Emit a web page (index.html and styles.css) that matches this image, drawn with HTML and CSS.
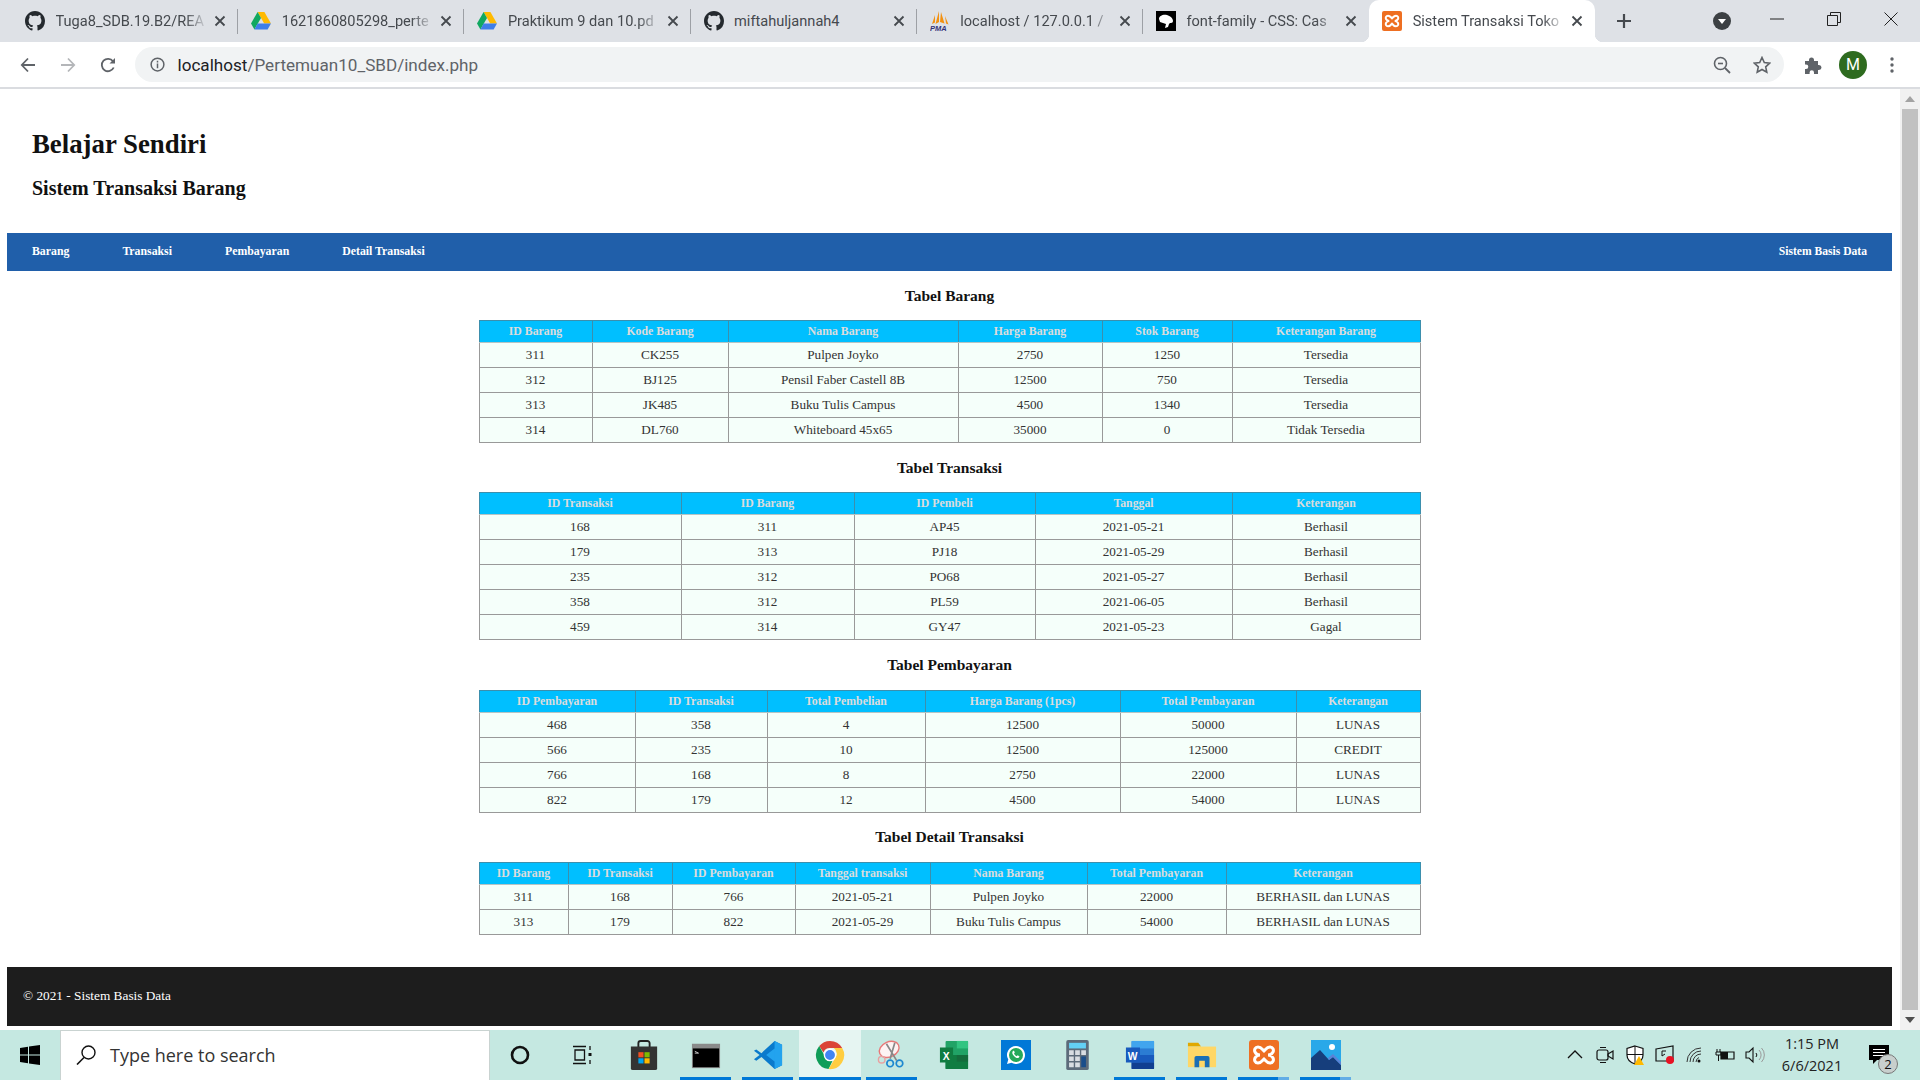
FILE: index.html
```html
<!DOCTYPE html>
<html lang="en">
<head>
    <meta charset="UTF-8">
    <title>Sistem Transaksi Toko</title>
    <link rel="stylesheet" href="styles.css">
</head>
<body>
    <svg class="defs" width="0" height="0">
        <symbol id="github" viewBox="0 0 16 16"><path d="M8 0C3.58 0 0 3.58 0 8c0 3.54 2.29 6.53 5.47 7.59.4.07.55-.17.55-.38 0-.19-.01-.82-.01-1.49-2.01.37-2.53-.49-2.69-.94-.09-.23-.48-.94-.82-1.13-.28-.15-.68-.52-.01-.53.63-.01 1.08.58 1.23.82.72 1.21 1.87.87 2.33.66.07-.52.28-.87.51-1.07-1.78-.2-3.64-.89-3.64-3.95 0-.87.31-1.59.82-2.15-.08-.2-.36-1.02.08-2.12 0 0 .67-.21 2.2.82.64-.18 1.32-.27 2-.27.68 0 1.36.09 2 .27 1.53-1.04 2.2-.82 2.2-.82.44 1.1.16 1.92.08 2.12.51.56.82 1.27.82 2.15 0 3.07-1.87 3.75-3.65 3.95.29.25.54.73.54 1.48 0 1.07-.01 1.93-.01 2.2 0 .21.15.46.55.38A8.013 8.013 0 0016 8c0-4.42-3.58-8-8-8z" fill="#24292e"/></symbol>
        <symbol id="drive" viewBox="0 0 20 18"><path d="M6.6 0h6.8l6.6 11.5h-6.8z" fill="#ffba00"/><path d="M6.6 0l3.4 5.9L3.4 17.5 0 11.5z" fill="#11a861"/><path d="M6.6 11.5H20l-3.4 6H3.4z" fill="#3f7ee8"/></symbol>
        <symbol id="close" viewBox="0 0 12 12"><path d="M1.5 1.5l9 9m0-9l-9 9" stroke="#45494e" stroke-width="1.8" fill="none"/></symbol>
        <symbol id="xampp" viewBox="0 0 30 30"><rect width="30" height="30" rx="3" fill="#ee6f22"/><path d="M9 7c3 0 4 2 6 4 2-2 3-4 6-4 3 0 4 3 3 5-1 2-3 3-5 3 2 0 4 1 5 3 1 2 0 5-3 5-3 0-4-2-6-4-2 2-3 4-6 4-3 0-4-3-3-5 1-2 3-3 5-3-2 0-4-1-5-3-1-2 0-5 3-5z" fill="none" stroke="#fff" stroke-width="3"/></symbol>
    </svg>

    <div class="tabstrip">
        <div class="tab">
            <svg class="favicon"><use href="#github"/></svg>
            <span class="tab-title">Tuga8_SDB.19.B2/REA</span>
            <svg class="tab-close"><use href="#close"/></svg>
        </div>
        <div class="tab">
            <svg class="favicon"><use href="#drive"/></svg>
            <span class="tab-title">1621860805298_perte</span>
            <svg class="tab-close"><use href="#close"/></svg>
        </div>
        <div class="tab">
            <svg class="favicon"><use href="#drive"/></svg>
            <span class="tab-title">Praktikum 9 dan 10.pd</span>
            <svg class="tab-close"><use href="#close"/></svg>
        </div>
        <div class="tab">
            <svg class="favicon"><use href="#github"/></svg>
            <span class="tab-title">miftahuljannah4</span>
            <svg class="tab-close"><use href="#close"/></svg>
        </div>
        <div class="tab">
            <svg class="favicon" viewBox="0 0 20 20"><path d="M9 0L5.500 13l3.500-2zM11 1l-1 10 4.500 1.500zM5 4L2 13l3-1.500zM15 5l1 7.500 2.500 1z" fill="#f29111"/><text x="0" y="19.500" class="pma-text">PMA</text></svg>
            <span class="tab-title">localhost / 127.0.0.1 /</span>
            <svg class="tab-close"><use href="#close"/></svg>
        </div>
        <div class="tab tab-before-active">
            <svg class="favicon" viewBox="0 0 20 20"><rect width="20" height="20" fill="#000"/><path d="M3 8c0-3 4-5 8-4 3 1 6 3 6 6 0 2-2 2-3 2l-1 1-1 3-3 1 1-4-3-1-3-1z" fill="#fff"/></svg>
            <span class="tab-title">font-family - CSS: Cas</span>
            <svg class="tab-close"><use href="#close"/></svg>
        </div>
        <div class="tab tab-active">
            <svg class="favicon"><use href="#xampp"/></svg>
            <span class="tab-title">Sistem Transaksi Toko</span>
            <svg class="tab-close"><use href="#close"/></svg>
        </div>
        <svg class="new-tab" viewBox="0 0 16 16"><path d="M8 1v14M1 8h14" stroke="#45494e" stroke-width="2.2"/></svg>
        <div class="strip-right">
            <svg class="tab-search" viewBox="0 0 18 18"><circle cx="9" cy="9" r="9" fill="#3c4043"/><path d="M5 7h8l-4 5z" fill="#fff"/></svg>
            <div class="window-controls">
                <svg viewBox="0 0 14 14"><path d="M0 7h14" stroke="#222" stroke-width="1"/></svg>
                <svg viewBox="0 0 14 14"><path d="M.5 3.5h10v10H.5zM3.5 3.5v-3h10v10h-3" fill="none" stroke="#222"/></svg>
                <svg viewBox="0 0 14 14"><path d="M.5.5l13 13m0-13l-13 13" stroke="#222"/></svg>
            </div>
        </div>
    </div>

    <div class="toolbar">
        <svg class="nav-btn" viewBox="0 0 16 16"><path d="M15 8H2M8 1.5L1.8 8 8 14.5" fill="none" stroke="#5f6368" stroke-width="1.8"/></svg>
        <svg class="nav-btn" viewBox="0 0 16 16"><path d="M1 8h13M8 1.5L14.2 8 8 14.5" fill="none" stroke="#b4b6b9" stroke-width="1.8"/></svg>
        <svg class="nav-btn" viewBox="0 0 16 16"><path d="M13.7 10.5A6.2 6.2 0 1 1 13 4.3" fill="none" stroke="#5f6368" stroke-width="1.8"/><path d="M15 1v5.5H9.5z" fill="#5f6368"/></svg>
        <div class="omnibox">
            <svg class="info-icon" viewBox="0 0 16 16"><circle cx="8" cy="8" r="6.8" fill="none" stroke="#5f6368" stroke-width="1.6"/><path d="M8 7v5M8 4v1.8" stroke="#5f6368" stroke-width="1.6"/></svg>
            <span class="url"><span class="url-host">localhost</span>/Pertemuan10_SBD/index.php</span>
            <svg class="omni-icon" viewBox="0 0 18 18"><circle cx="7.5" cy="7.5" r="6" fill="none" stroke="#5f6368" stroke-width="1.6"/><path d="M12 12l5 5" stroke="#5f6368" stroke-width="1.8"/><path d="M5 7.5h5" stroke="#5f6368" stroke-width="1.6"/></svg>
            <svg class="omni-icon" viewBox="0 0 18 18"><path d="M9 1.5l2.3 5 5.4.6-4 3.7 1.1 5.4L9 13.500l-4.800 2.700 1.100-5.400-4-3.700 5.400-.6z" fill="none" stroke="#5f6368" stroke-width="1.600"/></svg>
        </div>
        <svg class="puzzle" viewBox="0 0 18 18"><path d="M1 5h4V4a2.500 2.500 0 0 1 5 0v1h4v4h1a2.500 2.500 0 0 1 0 5h-1v4H10v-1.500a2.200 2.200 0 0 0-4.400 0V18H1v-5h1a2.300 2.300 0 0 0 0-4.600H1z" fill="#5f6368"/></svg>
        <div class="avatar">M</div>
        <svg class="menu-dots" viewBox="0 0 4 16"><circle cx="2" cy="2" r="1.700"/><circle cx="2" cy="8" r="1.700"/><circle cx="2" cy="14" r="1.700"/></svg>
    </div>

    <div class="viewport">
        <div class="page">
            <header class="site-header">
                <h1>Belajar Sendiri</h1>
                <h2>Sistem Transaksi Barang</h2>
            </header>

            <nav class="menu">
                <a>Barang</a>
                <a>Transaksi</a>
                <a>Pembayaran</a>
                <a>Detail Transaksi</a>
                <a class="menu-right">Sistem Basis Data</a>
            </nav>

            <main class="content">
                <h3>Tabel Barang</h3>
                <table class="tbl-barang">
                    <tr><th>ID Barang</th><th>Kode Barang</th><th>Nama Barang</th><th>Harga Barang</th><th>Stok Barang</th><th>Keterangan Barang</th></tr>
                    <tr><td>311</td><td>CK255</td><td>Pulpen Joyko</td><td>2750</td><td>1250</td><td>Tersedia</td></tr>
                    <tr><td>312</td><td>BJ125</td><td>Pensil Faber Castell 8B</td><td>12500</td><td>750</td><td>Tersedia</td></tr>
                    <tr><td>313</td><td>JK485</td><td>Buku Tulis Campus</td><td>4500</td><td>1340</td><td>Tersedia</td></tr>
                    <tr><td>314</td><td>DL760</td><td>Whiteboard 45x65</td><td>35000</td><td>0</td><td>Tidak Tersedia</td></tr>
                </table>

                <h3>Tabel Transaksi</h3>
                <table class="tbl-transaksi">
                    <tr><th>ID Transaksi</th><th>ID Barang</th><th>ID Pembeli</th><th>Tanggal</th><th>Keterangan</th></tr>
                    <tr><td>168</td><td>311</td><td>AP45</td><td>2021-05-21</td><td>Berhasil</td></tr>
                    <tr><td>179</td><td>313</td><td>PJ18</td><td>2021-05-29</td><td>Berhasil</td></tr>
                    <tr><td>235</td><td>312</td><td>PO68</td><td>2021-05-27</td><td>Berhasil</td></tr>
                    <tr><td>358</td><td>312</td><td>PL59</td><td>2021-06-05</td><td>Berhasil</td></tr>
                    <tr><td>459</td><td>314</td><td>GY47</td><td>2021-05-23</td><td>Gagal</td></tr>
                </table>

                <h3 class="title-tall">Tabel Pembayaran</h3>
                <table class="tbl-pembayaran">
                    <tr><th>ID Pembayaran</th><th>ID Transaksi</th><th>Total Pembelian</th><th>Harga Barang (1pcs)</th><th>Total Pembayaran</th><th>Keterangan</th></tr>
                    <tr><td>468</td><td>358</td><td>4</td><td>12500</td><td>50000</td><td>LUNAS</td></tr>
                    <tr><td>566</td><td>235</td><td>10</td><td>12500</td><td>125000</td><td>CREDIT</td></tr>
                    <tr><td>766</td><td>168</td><td>8</td><td>2750</td><td>22000</td><td>LUNAS</td></tr>
                    <tr><td>822</td><td>179</td><td>12</td><td>4500</td><td>54000</td><td>LUNAS</td></tr>
                </table>

                <h3 class="title-last">Tabel Detail Transaksi</h3>
                <table class="tbl-detail">
                    <tr><th>ID Barang</th><th>ID Transaksi</th><th>ID Pembayaran</th><th>Tanggal transaksi</th><th>Nama Barang</th><th>Total Pembayaran</th><th>Keterangan</th></tr>
                    <tr><td>311</td><td>168</td><td>766</td><td>2021-05-21</td><td>Pulpen Joyko</td><td>22000</td><td>BERHASIL dan LUNAS</td></tr>
                    <tr><td>313</td><td>179</td><td>822</td><td>2021-05-29</td><td>Buku Tulis Campus</td><td>54000</td><td>BERHASIL dan LUNAS</td></tr>
                </table>
            </main>

            <footer class="site-footer">© 2021 - Sistem Basis Data</footer>
        </div>
        <div class="scrollbar">
            <div class="arrow-up"></div>
            <div class="thumb"></div>
            <div class="arrow-down"></div>
        </div>
    </div>

    <div class="taskbar">
        <svg class="start" viewBox="0 0 20 20"><path d="M0 3l8-1.200V9.500H0zM9 1.600L20 0v9.500H9zM0 10.500h8v7.700L0 17zM9 10.500h11V20L9 18.400z" fill="#000"/></svg>
        <div class="searchbox">
            <svg class="search-icon" viewBox="0 0 20 20"><circle cx="12.500" cy="7.500" r="6.500" fill="none" stroke="#111" stroke-width="1.400"/><path d="M8 12.500L1 19.500" stroke="#111" stroke-width="1.600"/></svg>
            <span>Type here to search</span>
        </div>
        <div class="task-icons">
            <div class="task"><svg viewBox="0 0 20 20" class="icon-small"><circle cx="10" cy="10" r="8" fill="none" stroke="#111" stroke-width="2.600"/></svg></div>
            <div class="task"><svg viewBox="0 0 20 20" class="icon-small"><path d="M1 1.500h13M1 18.500h13M3 5h9.500v10H3zM18 1v4M18 15v4" fill="none" stroke="#111" stroke-width="1.300"/><rect x="16.500" y="8" width="3" height="3" fill="#111"/></svg></div>
            <div class="task"><svg viewBox="0 0 30 32"><path d="M9 8V3.500A2.500 2.500 0 0 1 11.500 1h7A2.500 2.500 0 0 1 21 3.500V8" fill="none" stroke="#222" stroke-width="2"/><path d="M1 7h28v23a2 2 0 0 1-2 2H3a2 2 0 0 1-2-2z" fill="#333"/><rect x="9" y="13" width="5.500" height="5.500" fill="#f25022"/><rect x="15.500" y="13" width="5.500" height="5.500" fill="#7fba00"/><rect x="9" y="19.500" width="5.500" height="5.500" fill="#00a4ef"/><rect x="15.500" y="19.500" width="5.500" height="5.500" fill="#ffb900"/></svg></div>
            <div class="task task-open"><svg viewBox="0 0 32 32"><rect x="1" y="4" width="30" height="26" fill="#8a8a8a"/><rect x="2" y="9" width="28" height="20" fill="#000"/><path d="M4 12l4 2H4" stroke="#ccc" fill="none"/></svg></div>
            <div class="task task-open"><svg viewBox="0 0 32 32"><path d="M23 1l8 4v22l-8 4L9 18l-5.500 4L1 20.500 7 16 1 11.500 3.500 10 9 14z" fill="#0a7acc"/><path d="M23 1l8 4v22l-8 4zM23 9l-9 7 9 7z" fill="#23a3ee" fill-rule="evenodd"/></svg></div>
            <div class="task task-open task-current"><svg viewBox="0 0 32 32"><path d="M16 1a15 15 0 0 1 13 7.500H16a7.500 7.500 0 0 0-7 4.700L4.500 6.500A15 15 0 0 1 16 1z" fill="#db4437"/><path d="M4.500 6.500L11 18a7.500 7.500 0 0 0 8 3.500L14.500 31A15 15 0 0 1 4.500 6.500z" fill="#0f9d58"/><path d="M29 8.500A15 15 0 0 1 14.500 31L21 20a7.500 7.500 0 0 0-1-11.500z" fill="#ffcd40"/><circle cx="16" cy="16" r="6" fill="#4285f4" stroke="#fff" stroke-width="1.500"/></svg></div>
            <div class="task task-open"><svg viewBox="0 0 32 32"><ellipse cx="13" cy="10" rx="11" ry="8" fill="#fdf3f3" stroke="#e87878" stroke-width="1.500" transform="rotate(-25 13 10)"/><path d="M10 4l11 18M19 3L14 20" stroke="#888" stroke-width="1.800"/><circle cx="14" cy="25" r="3.500" fill="none" stroke="#1e88d0" stroke-width="1.800"/><circle cx="24" cy="25" r="3.500" fill="none" stroke="#1e88d0" stroke-width="1.800"/><circle cx="5" cy="21" r="3.500" fill="none" stroke="#e9a0a0" stroke-width="1.500"/></svg></div>
            <div class="task"><svg viewBox="0 0 32 32"><rect x="7" y="1" width="24" height="30" rx="1" fill="#21a366"/><path d="M7 16h24v15H8a1 1 0 0 1-1-1z" fill="#107c41"/><path d="M19 1h12v8H19z" fill="#33c481"/><path d="M19 16h12v7H19z" fill="#185c37" opacity=".5"/><rect x="1" y="8" width="14" height="16" fill="#107c41"/><text x="4" y="21" class="office-letter">X</text></svg></div>
            <div class="task"><svg viewBox="0 0 30 30"><rect width="30" height="30" fill="#0078d7"/><path d="M15 6a9 9 0 0 0-7.700 13.600L6 24l4.500-1.200A9 9 0 1 0 15 6z" fill="#fff"/><circle cx="15" cy="15" r="7" fill="#25a95a"/><path d="M12 11c-1.300 1.300-.7 3 .8 4.800 1.700 1.900 3.400 2.800 4.800 2 .9-.5 1-1.300.7-1.600l-1.700-.9-.8.900c-1.300-.4-2.300-1.500-2.800-2.700l.8-.9-.8-1.800c-.3-.2-.7-.1-1 .2z" fill="#fff"/></svg></div>
            <div class="task"><svg viewBox="0 0 24 32" class="icon-calc"><rect width="24" height="32" rx="2" fill="#5c6b7a"/><rect x="3" y="3" width="18" height="6" fill="#63d0f5"/><path d="M3 11h5v5H3zM9.500 11h5v5h-5zM16 11h5v5h-5zM3 17.500h5v5H3zM9.500 17.500h5v5h-5zM3 24h5v5H3zM9.500 24h5v5h-5z" fill="#d8dde2"/><rect x="16" y="17.500" width="5" height="11.500" fill="#1a4e8a"/></svg></div>
            <div class="task task-open"><svg viewBox="0 0 32 32"><rect x="7" y="1" width="24" height="30" rx="1" fill="#2b7cd3"/><path d="M7 1h24v8H7z" fill="#41a5ee"/><path d="M7 16h24v8H7z" fill="#185abd"/><path d="M7 24h24v6a1 1 0 0 1-1 1H8a1 1 0 0 1-1-1z" fill="#103f91"/><rect x="1" y="8" width="15" height="16" fill="#185abd"/><text x="3" y="21" class="office-letter">W</text></svg></div>
            <div class="task task-open"><svg viewBox="0 0 32 32"><path d="M1 3h11l3 4h-14z" fill="#e0a800"/><path d="M1 7h30v22H1z" fill="#ffd766"/><path d="M8 29V19a2 2 0 0 1 2-2h12a2 2 0 0 1 2 2v10h-5v-7h-6v7z" fill="#1b6fb5"/></svg></div>
            <div class="task task-open task-double"><svg><use href="#xampp"/></svg></div>
            <div class="task task-open task-double"><svg viewBox="0 0 30 30"><rect width="30" height="30" fill="#29a8e9"/><circle cx="21" cy="7" r="3" fill="#fff"/><path d="M0 30V18l9-8 9 10 4-3 8 8v5z" fill="#163e7c"/><path d="M18 20l4-3 8 8v-3l-8-8-5 4z" fill="#5c82d6"/></svg></div>
        </div>
        <div class="tray">
            <svg class="tray-icon" viewBox="0 0 20 20"><path d="M3 13l7-7 7 7" fill="none" stroke="#111" stroke-width="1.300"/></svg>
            <svg class="tray-icon" viewBox="0 0 20 20"><rect x="2" y="5" width="11" height="10" rx="2" fill="none" stroke="#111" stroke-width="1.200"/><path d="M13 9l5-3v8l-5-3z" fill="none" stroke="#111" stroke-width="1.200"/><path d="M5 2.500h6M5 17.500h6" stroke="#111"/></svg>
            <svg class="tray-icon" viewBox="0 0 20 20"><path d="M10 1l8 2.500V10c0 4.500-3.500 7.500-8 9-4.500-1.500-8-4.500-8-9V3.500z" fill="#fff" stroke="#111" stroke-width="1.200"/><path d="M10 1v18M2 9.500h16" stroke="#111"/><path d="M14 11l5 9H9z" fill="#ffb900"/></svg>
            <svg class="tray-icon" viewBox="0 0 20 20"><path d="M1 4l17-3v15H1z" fill="none" stroke="#111" stroke-width="1.200"/><path d="M11 6H7v5M7 11l3-2" fill="none" stroke="#111"/><circle cx="15" cy="15" r="4" fill="#e81123"/></svg>
            <svg class="tray-icon" viewBox="0 0 20 20"><path d="M2 17A14 14 0 0 1 16 3M5 17A11 11 0 0 1 16 6M8 17a8 8 0 0 1 8-8M11 17a5 5 0 0 1 3-4.500" fill="none" stroke="#333" stroke-width="1"/><circle cx="14" cy="16" r="1.500" fill="#111"/></svg>
            <svg class="tray-icon" viewBox="0 0 20 20"><path d="M6 7h13v7H6z" fill="none" stroke="#111" stroke-width="1.200"/><rect x="6" y="7" width="7" height="7" fill="#111"/><path d="M2 4v3M5 4v3M1 7h5v3H1zM3.500 10v6" stroke="#111" fill="none"/></svg>
            <svg class="tray-icon" viewBox="0 0 20 20"><path d="M1 7h3l4-4v14l-4-4H1z" fill="none" stroke="#111" stroke-width="1.100"/><path d="M11 8a3 3 0 0 1 0 4" fill="none" stroke="#111"/><path d="M14 5a7 7 0 0 1 0 10M16.500 3a10 10 0 0 1 0 14" fill="none" stroke="#999"/></svg>
            <div class="clock">
                <span>1:15 PM</span>
                <span>6/6/2021</span>
            </div>
            <div class="notify">
                <svg viewBox="0 0 20 20"><path d="M0 0h20v15H8l-4 4v-4H0z" fill="#000"/><path d="M4 4.500h12M4 7.500h12M4 10.500h12" stroke="#fff"/></svg>
                <span class="notify-badge">2</span>
            </div>
        </div>
    </div>
</body>
</html>
```

FILE: styles.css
```css
* {
    box-sizing: border-box;
}

html, body {
    margin: 0;
    padding: 0;
    height: 100%;
    overflow: hidden;
}

body {
    display: flex;
    flex-direction: column;
    width: 1920px;
    height: 1080px;
    background-color: #fff;
    font-family: "Liberation Serif", "Times New Roman", serif;
}

.defs {
    position: absolute;
}

/* browser tabs */
.tabstrip {
    display: flex;
    align-items: center;
    height: 42px;
    padding-left: 12px;
    background-color: #dee1e6;
    font-family: Roboto, Arial, sans-serif;
    font-size: 14.6px;
    color: #45494e;
    flex-shrink: 0;
}

.tab {
    position: relative;
    display: flex;
    align-items: center;
    width: 226.2px;
    height: 42px;
    padding: 0 12px 0 13px;
}

.tab::after {
    content: "";
    position: absolute;
    right: 0;
    top: 9px;
    width: 1px;
    height: 25px;
    background-color: #9da0a5;
}

.tab-before-active::after {
    display: none;
}

.tab-active {
    background-color: #fff;
    border-radius: 10px 10px 0 0;
}

.tab-active::before {
    content: "";
    position: absolute;
    right: -8px;
    bottom: 0;
    width: 8px;
    height: 8px;
    background: radial-gradient(circle at 100% 0, #dee1e6 8px, #fff 8.5px);
}

.tab-active::after {
    left: -8px;
    right: auto;
    top: auto;
    bottom: 0;
    width: 8px;
    height: 8px;
    background: radial-gradient(circle at 0 0, #dee1e6 8px, #fff 8.5px);
}

.favicon {
    width: 20px;
    height: 20px;
    flex-shrink: 0;
}

.pma-text {
    font-family: "Liberation Sans", sans-serif;
    font-size: 7.5px;
    font-style: italic;
    font-weight: bold;
    fill: #33337a;
}

.tab-title {
    flex: 1;
    margin-left: 10.5px;
    white-space: nowrap;
    overflow: hidden;
    -webkit-mask-image: linear-gradient(to right, #000 85%, transparent);
    mask-image: linear-gradient(to right, #000 85%, transparent);
}

.tab:nth-child(4) .tab-title {
    -webkit-mask-image: none;
    mask-image: none;
}

.tab-close {
    width: 12px;
    height: 12px;
    margin-left: 6px;
    flex-shrink: 0;
}

.new-tab {
    width: 16px;
    height: 16px;
    margin-left: 21px;
}

.strip-right {
    display: flex;
    align-items: center;
    margin-left: auto;
}

.tab-search {
    width: 18px;
    height: 18px;
    margin-right: 39px;
}

.window-controls {
    display: flex;
    gap: 43px;
    padding-right: 22px;
    margin-top: -5px;
}

.window-controls svg {
    width: 14px;
    height: 14px;
}

/* address bar */
.toolbar {
    display: flex;
    align-items: center;
    height: 47px;
    padding: 0 22px 0 20px;
    background-color: #fff;
    border-bottom: 2px solid #dadce0;
    flex-shrink: 0;
}

.nav-btn {
    width: 16px;
    height: 16px;
    margin-right: 24px;
}

.omnibox {
    display: flex;
    align-items: center;
    width: 1649px;
    height: 35px;
    margin-left: -5px;
    padding: 0 13px 0 15px;
    background-color: #f1f3f4;
    border-radius: 18px;
    font-family: Roboto, Arial, sans-serif;
    font-size: 17.1px;
    color: #5f6368;
}

.info-icon {
    width: 15px;
    height: 15px;
}

.url {
    margin-left: 12.5px;
    flex: 1;
}

.url-host {
    color: #202124;
}

.omni-icon {
    width: 18px;
    height: 18px;
    margin-left: 22px;
}

.puzzle {
    width: 18px;
    height: 18px;
    margin-left: 20px;
}

.avatar {
    display: flex;
    align-items: center;
    justify-content: center;
    width: 28px;
    height: 28px;
    margin-left: 17px;
    border-radius: 50%;
    background-color: #2e6b1f;
    color: #fff;
    font-family: Roboto, Arial, sans-serif;
    font-size: 16px;
}

.menu-dots {
    width: 4px;
    height: 16px;
    margin-left: 23px;
    fill: #5f6368;
}

/* the page inside the browser */
.viewport {
    display: flex;
    height: 941px;
    flex-shrink: 0;
}

.page {
    width: 1900px;
    padding: 0 8px 0 7px;
    overflow: hidden;
}

.site-header {
    height: 144px;
    padding: 40px 25px 0;
    color: #111;
}

h1 {
    margin: 0;
    font-size: 26.8px;
    line-height: 30px;
}

h2 {
    margin: 18px 0 0;
    font-size: 20px;
    line-height: 23px;
}

.menu {
    display: flex;
    align-items: center;
    gap: 53px;
    height: 38px;
    padding: 0 25px 2px;
    background-color: #205faa;
    color: #fff;
    font-size: 11.8px;
    font-weight: bold;
}

.menu-right {
    margin-left: auto;
    font-size: 11.6px;
}

.content {
    height: 664px;
}

h3 {
    display: flex;
    align-items: center;
    justify-content: center;
    margin: 0;
    height: 49px;
    font-size: 15.5px;
    color: #111;
}

h3.title-tall {
    height: 50px;
}

h3.title-last {
    padding-bottom: 2px;
}

table {
    width: 942px;
    margin: 0 auto;
    border-collapse: collapse;
    table-layout: fixed;
    font-size: 13.2px;
    color: #333;
}

th {
    height: 22px;
    padding: 0;
    background-color: #00bfff;
    border: 1px solid #3b8fad;
    border-bottom-color: #b5c4c4;
    color: #dcdcdc;
    font-size: 11.8px;
    font-weight: bold;
}

td {
    height: 25px;
    padding: 0;
    background-color: #f5fffa;
    border: 1px solid #999;
    text-align: center;
}

/* column widths per table */
.tbl-barang th:nth-child(1) { width: 113px; }
.tbl-barang th:nth-child(2) { width: 136px; }
.tbl-barang th:nth-child(3) { width: 230px; }
.tbl-barang th:nth-child(4) { width: 144px; }
.tbl-barang th:nth-child(5) { width: 130px; }

.tbl-transaksi th:nth-child(1) { width: 202px; }
.tbl-transaksi th:nth-child(2) { width: 173px; }
.tbl-transaksi th:nth-child(3) { width: 181px; }
.tbl-transaksi th:nth-child(4) { width: 197px; }

.tbl-pembayaran th:nth-child(1) { width: 156px; }
.tbl-pembayaran th:nth-child(2) { width: 132px; }
.tbl-pembayaran th:nth-child(3) { width: 158px; }
.tbl-pembayaran th:nth-child(4) { width: 195px; }
.tbl-pembayaran th:nth-child(5) { width: 176px; }

.tbl-detail th:nth-child(1) { width: 89px; }
.tbl-detail th:nth-child(2) { width: 104px; }
.tbl-detail th:nth-child(3) { width: 123px; }
.tbl-detail th:nth-child(4) { width: 135px; }
.tbl-detail th:nth-child(5) { width: 157px; }
.tbl-detail th:nth-child(6) { width: 139px; }

.site-footer {
    display: flex;
    align-items: center;
    height: 59px;
    margin-top: 32px;
    padding: 0 0 2px 16px;
    background-color: #1d1d1d;
    color: #fff;
    font-size: 13.3px;
}

.scrollbar {
    display: flex;
    flex-direction: column;
    align-items: center;
    width: 20px;
    background-color: #f1f1f1;
}

.arrow-up {
    margin: 7px 0 7px;
    border: 5px solid transparent;
    border-top: 0;
    border-bottom: 6px solid #a3a3a3;
}

.thumb {
    flex: 1;
    width: 16px;
    background-color: #c1c1c1;
}

.arrow-down {
    margin: 7px 0 7px;
    border: 5px solid transparent;
    border-bottom: 0;
    border-top: 6px solid #505050;
}

/* windows taskbar */
.taskbar {
    display: flex;
    height: 50px;
    background-color: #c5e8e1;
    flex-shrink: 0;
}

.start {
    width: 20px;
    height: 20px;
    margin: 15px 20px 0;
}

.searchbox {
    display: flex;
    align-items: center;
    width: 430px;
    height: 50px;
    padding: 0 0 2px 15px;
    background-color: #fff;
    border: 1px solid #c9d3d1;
    border-bottom: 0;
    font-family: "Open Sans", Arial, sans-serif;
    font-size: 18px;
    color: #333;
}

.search-icon {
    width: 20px;
    height: 20px;
    margin-right: 14px;
}

.task-icons {
    display: flex;
    margin-left: -1.5px;
}

.task {
    display: flex;
    align-items: center;
    justify-content: center;
    width: 62px;
    height: 50px;
}

.task svg {
    width: 30px;
    height: 30px;
}

.task .icon-small {
    width: 20px;
    height: 20px;
}

.task .icon-calc {
    width: 23px;
    height: 30px;
}

.office-letter {
    font-family: "Liberation Sans", sans-serif;
    font-size: 11px;
    font-weight: bold;
    fill: #fff;
}

.task-open {
    background-image: linear-gradient(#0078d7, #0078d7);
    background-repeat: no-repeat;
    background-position: center bottom;
    background-size: 51px 3px;
}

.task-current {
    background-color: #e6f5f2;
    background-size: 100% 3px;
}

.task-double {
    background-image: linear-gradient(to right, #0078d7 40px, #62ade6 40px);
}

.tray {
    display: flex;
    align-items: center;
    margin-left: auto;
    padding-right: 31px;
}

.tray-icon {
    width: 20px;
    height: 20px;
    margin-right: 10px;
}

.clock {
    display: flex;
    flex-direction: column;
    align-items: center;
    gap: 4px;
    width: 76px;
    margin: 0 19px 0 -1px;
    font-family: "Open Sans", Arial, sans-serif;
    font-size: 14.5px;
    line-height: 18px;
    color: #222;
}

.notify {
    position: relative;
    width: 20px;
    height: 20px;
}

.notify svg {
    width: 20px;
    height: 20px;
}

.notify-badge {
    position: absolute;
    left: 9px;
    top: 9px;
    width: 20px;
    height: 20px;
    border-radius: 50%;
    background-color: #c8cfcd;
    border: 1px solid #777;
    text-align: center;
    font-family: "Open Sans", Arial, sans-serif;
    font-size: 13px;
    line-height: 18px;
    color: #111;
}
```
